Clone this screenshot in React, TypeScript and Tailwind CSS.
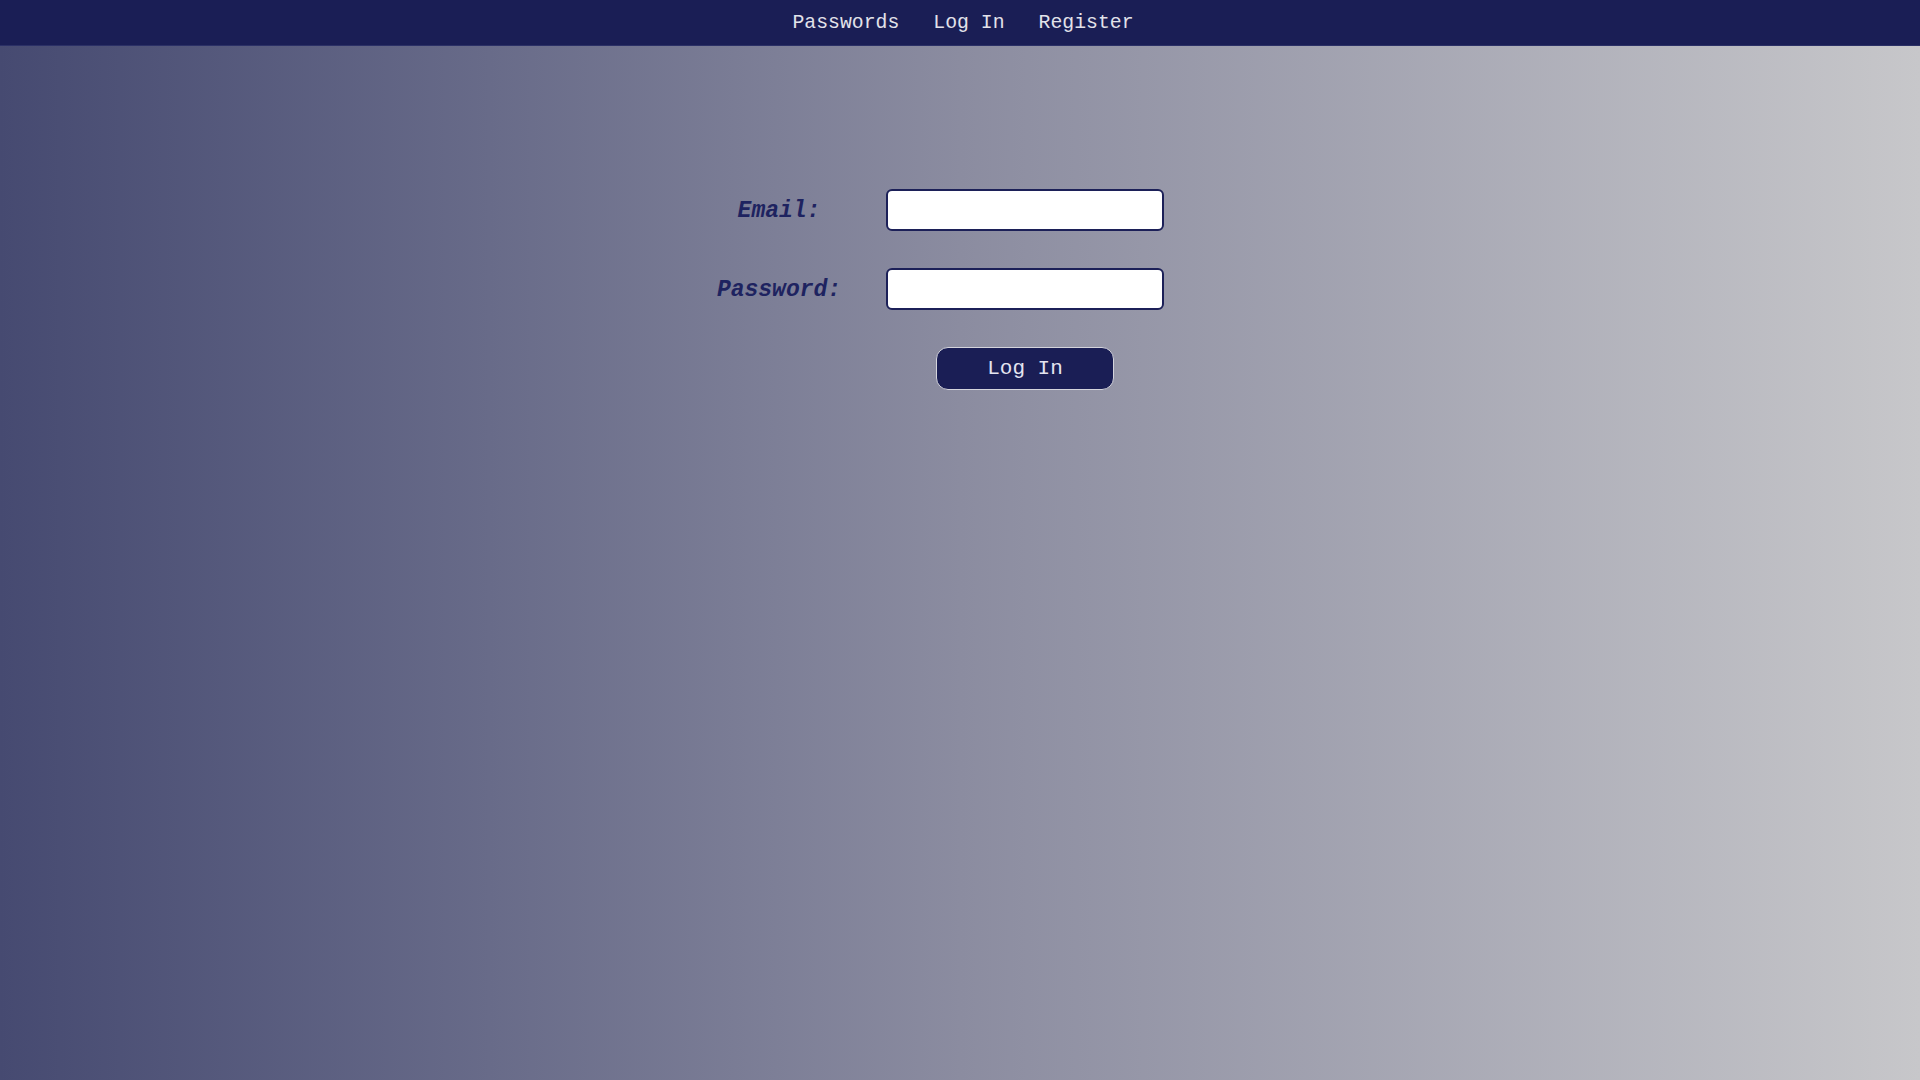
import React, { useState } from 'react';

const mono = { fontFamily: '"Liberation Mono", "Courier New", monospace' };

const NavBar: React.FC = () => {
  const links = ['Passwords', 'Log In', 'Register'];
  return (
    <nav className="h-[46px] bg-[#1a1e55] border-b border-[#2b3066] flex items-center justify-center gap-[34px] pl-[6px]">
      {links.map((link) => (
        <a key={link} href="#" className="text-[19.8px] leading-none text-[#e2e2ea] pt-[3px]" style={mono}>
          {link}
        </a>
      ))}
    </nav>
  );
};

const App: React.FC = () => {
  const [email, setEmail] = useState('');
  const [password, setPassword] = useState('');

  return (
    <div className="min-h-screen w-full bg-gradient-to-r from-[#464a71] via-[#8b8ca0] to-[#c7c7ca]" style={mono}>
      <NavBar />
      <div className="flex justify-center pt-[143px]">
        <form
          className="grid grid-cols-[158px_278px] gap-x-[28px] gap-y-[37px] items-center pr-[56px]"
          onSubmit={(e) => e.preventDefault()}
        >
          <label htmlFor="email" className="text-center italic font-bold text-[23px] text-[#1e2360] pt-[2px]">
            Email:
          </label>
          <input
            id="email"
            type="email"
            value={email}
            onChange={(e) => setEmail(e.target.value)}
            className="h-[42px] w-[278px] bg-white border-2 border-[#1c2058] rounded-[6px] px-2 outline-none"
          />
          <label htmlFor="password" className="text-center italic font-bold text-[23px] text-[#1e2360] pt-[2px]">
            Password:
          </label>
          <input
            id="password"
            type="password"
            value={password}
            onChange={(e) => setPassword(e.target.value)}
            className="h-[42px] w-[278px] bg-white border-2 border-[#1c2058] rounded-[6px] px-2 outline-none"
          />
          {/* empty cell to keep button under the inputs */}
          <div />
          <div className="flex justify-center">
            <button
              type="submit"
              className="h-[43px] w-[178px] bg-[#1a1e55] text-[#e4e4f0] border-[1.5px] border-[#d4d4dc] rounded-[12px] text-[21px]"
              style={mono}
            >
              Log In
            </button>
          </div>
        </form>
      </div>
    </div>
  );
};

export default App;
